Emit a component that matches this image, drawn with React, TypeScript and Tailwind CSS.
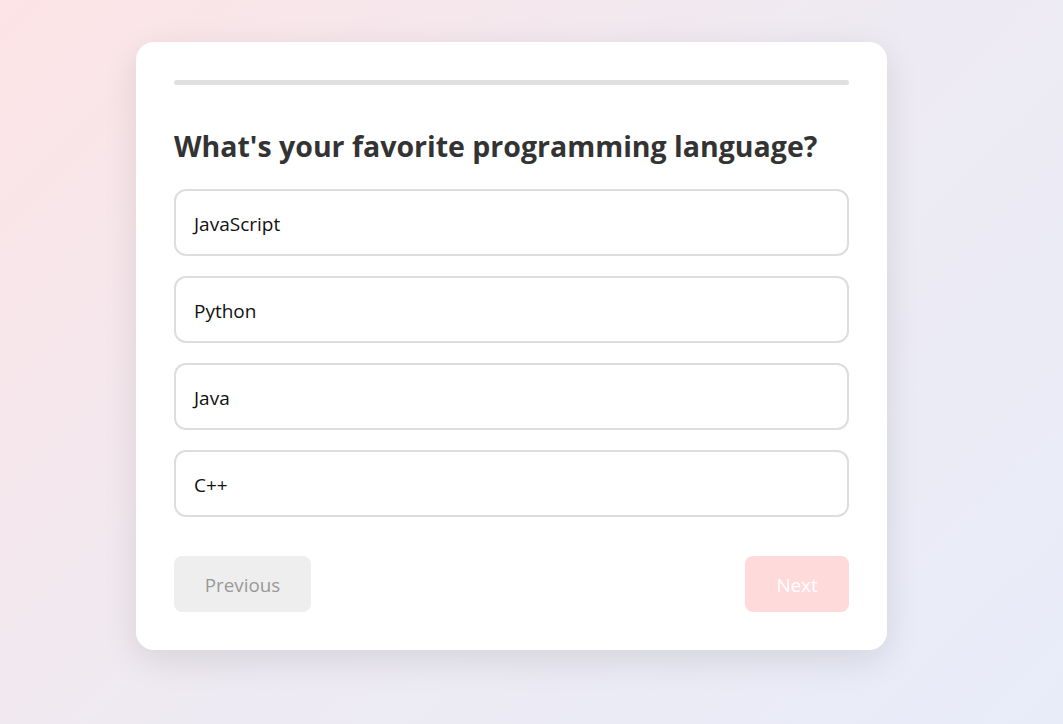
const options = ['JavaScript', 'Python', 'Java', 'C++'];

export default function App() {
  return (
    <div className="min-h-[724px] w-full bg-[linear-gradient(135deg,#fde4e6_0%,#eeeaf2_50%,#e8ecf9_100%)] pt-[42px] pl-[136px] font-['Open_Sans',sans-serif]">
      <div className="w-[751px] rounded-[18px] bg-white p-[38px] shadow-[0_10px_35px_rgba(0,0,0,0.1)]">
        <div className="h-[5px] w-full rounded-full bg-[#e0e0e0]" />
        <h2 className="mt-[42px] mb-[24px] text-[28.5px] font-bold leading-[38px] text-[#333]">
          What's your favorite programming language?
        </h2>
        <div className="flex flex-col gap-[20px]">
          {options.map((o) => (
            <div
              key={o}
              className="flex h-[67px] items-center rounded-xl border-2 border-[#ddd] px-[18px] pt-[3px] text-[19px] text-[#111]"
            >
              {o}
            </div>
          ))}
        </div>
        <div className="mt-[39px] flex items-center justify-between">
          <button className="h-[56px] w-[137px] rounded-lg bg-[#eee] pt-[3px] text-[18.8px] text-[#999]">Previous</button>
          <button className="h-[56px] w-[104px] rounded-lg bg-[#ffdadb] pt-[3px] text-[18.8px] text-white">Next</button>
        </div>
      </div>
    </div>
  );
}
